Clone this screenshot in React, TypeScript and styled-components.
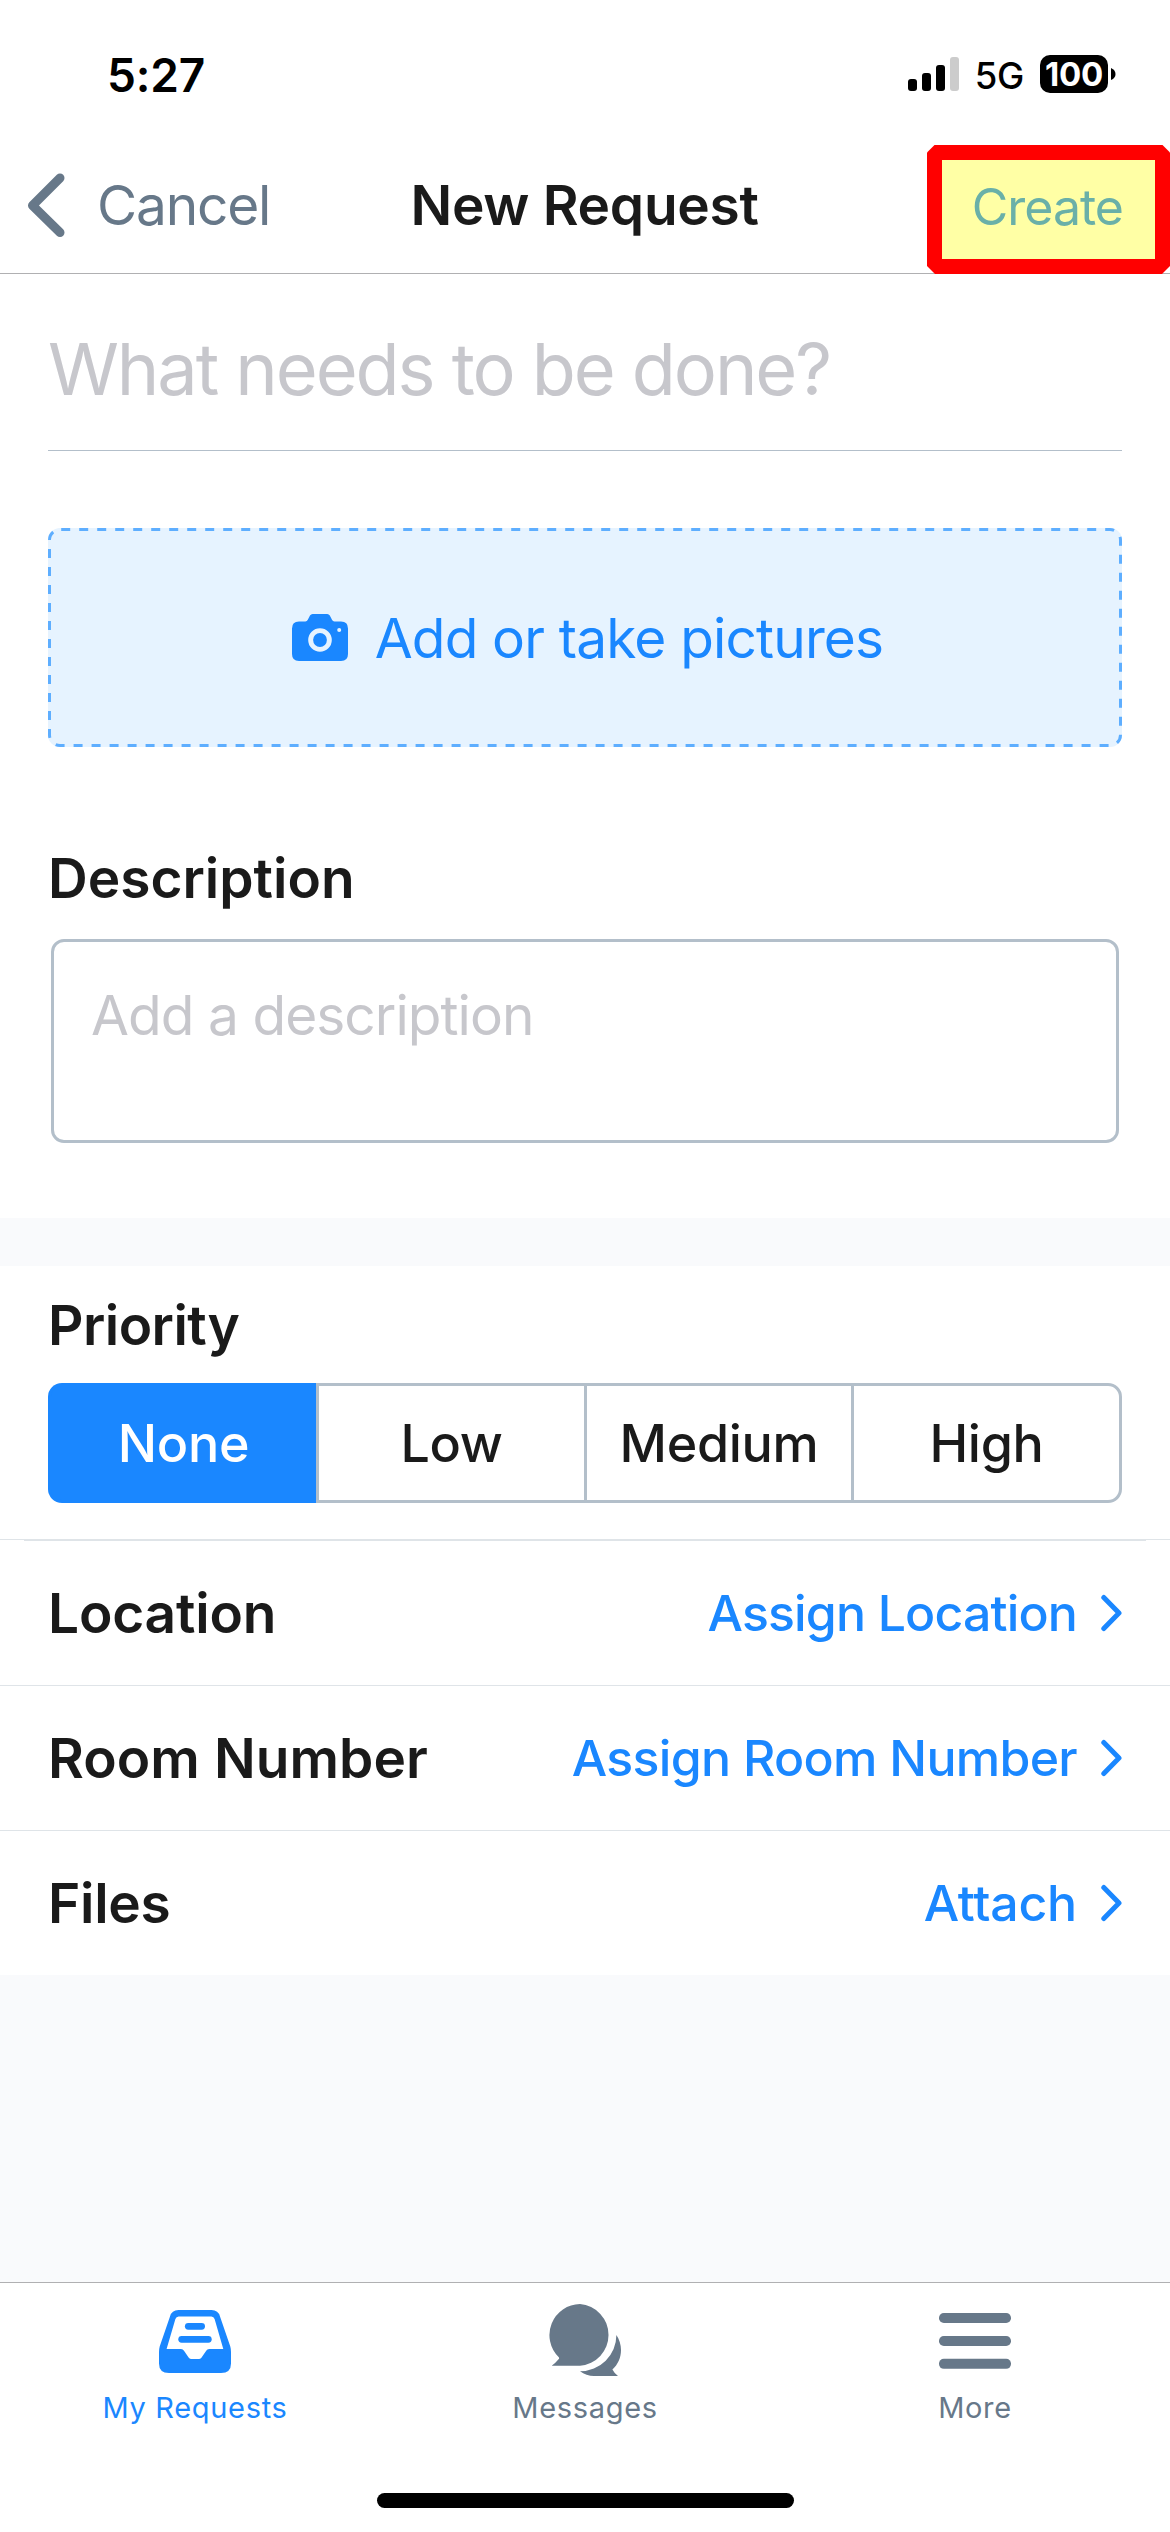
import React, { useState } from "react";
import styled, { createGlobalStyle } from "styled-components";

const color = {
  blue: "#1a87ff",
  slate: "#677889",
  ink: "#1a1a1a",
  placeholder: "#c7c7cc",
  border: "#b3bfca",
  hairline: "#dfe4e8",
  backdrop: "#f9fafc",
};

const GlobalStyle = createGlobalStyle`
  *, *::before, *::after { box-sizing: border-box; }
  body { margin: 0; background: #fff; }
  button { border: 0; padding: 0; margin: 0; background: none; font: inherit; color: inherit; cursor: pointer; }
`;

const Screen = styled.div`
  display: flex;
  flex-direction: column;
  width: 1170px;
  height: 2532px;
  overflow: hidden;
  background: ${color.backdrop};
  color: ${color.ink};
  font-family: Inter, "Liberation Sans", sans-serif;
  white-space: nowrap;
`;

/* ---------- Status bar ---------- */

const StatusBar = styled.div`
  display: flex;
  align-items: center;
  justify-content: space-between;
  height: 137px;
  padding: 13px 54px 0 107px;
  background: #fff;
  color: #000;
`;

const Clock = styled.span`
  font-size: 46px;
  font-weight: 600;
  letter-spacing: -0.2px;
`;

const StatusIcons = styled.div`
  display: flex;
  align-items: center;
  gap: 16px;
`;

const SignalIcon = styled.svg`
  display: block;
  margin-bottom: 2px;
`;

const Network = styled.span`
  padding-top: 1px;
  font-size: 36.5px;
  font-weight: 500;
  letter-spacing: -0.3px;
`;

const Battery = styled.div`
  display: flex;
  align-items: center;
  gap: 3px;
  margin-bottom: 2px;
`;

const BatteryBody = styled.span`
  width: 68px;
  height: 38px;
  border-radius: 10px;
  background: #000;
  color: #fff;
  font-size: 33px;
  font-weight: 700;
  line-height: 38px;
  letter-spacing: -0.3px;
  text-align: center;
`;

/* ---------- Navigation bar ---------- */

const NavBar = styled.header`
  position: relative;
  display: grid;
  grid-template-columns: 1fr auto 1fr;
  align-items: center;
  height: 137px;
  padding: 0 47px 0 26px;
  border-bottom: 1px solid #b0b0b2;
  background: #fff;
  font-size: 55px;
`;

const CancelButton = styled.button`
  display: flex;
  align-items: center;
  gap: 32px;
  color: ${color.slate};
  letter-spacing: -1.2px;
`;

const NavTitle = styled.h1`
  margin: 0 -10px 0 10px;
  font-size: 55px;
  font-weight: 600;
  letter-spacing: -0.29px;
`;

const CreateButton = styled.button`
  position: relative;
  justify-self: end;
  padding-top: 4px;
  color: #6ab0a8;
  font-size: 50px;
  letter-spacing: -1px;
`;

const Callout = styled.div`
  position: absolute;
  top: 7.5px;
  right: 0;
  width: 243px;
  height: 129.5px;
  padding: 15px;
  background: #f00;
  clip-path: polygon(
    8px 0, calc(100% - 8px) 0, 100% 8px, 100% calc(100% - 8px),
    calc(100% - 8px) 100%, 8px 100%, 0 calc(100% - 8px), 0 8px
  );
`;

const CalloutFill = styled.div`
  height: 100%;
  background: #ffffa5;
`;

/* ---------- Form ---------- */

const Section = styled.section<{ $top?: number; $bottom?: number }>`
  padding: ${(p) => p.$top ?? 0}px 48px ${(p) => p.$bottom ?? 0}px;
  background: #fff;
`;

const TitleField = styled.div`
  display: flex;
  align-items: center;
  height: 177px;
  padding-top: 13px;
  border-bottom: 1px solid ${color.border};
  color: ${color.placeholder};
  font-size: 72px;
  letter-spacing: -2.08px;
`;

const PhotoButton = styled.button`
  position: relative;
  display: flex;
  align-items: center;
  justify-content: center;
  gap: 27px;
  width: 100%;
  height: 219px;
  margin-top: 77px;
  padding-left: 5px;
  border-radius: 12px;
  background: #e6f3ff;
  color: ${color.blue};
  font-size: 55px;
  letter-spacing: -0.84px;
`;

const DashedOutline = styled.svg`
  position: absolute;
  inset: 0;
`;

const SectionLabel = styled.h2`
  margin: 0;
  font-size: 55px;
  font-weight: 600;
  line-height: 60px;
  letter-spacing: ${(p: { $tracking?: number }) => p.$tracking ?? 0}px;
`;

const DescriptionLabel = styled(SectionLabel)`
  margin-top: 101px;
`;

const DescriptionField = styled.div`
  height: 204px;
  margin: 31px 3px 0;
  padding: 43px 37px;
  border: 3px solid ${color.border};
  border-radius: 13px;
  color: ${color.placeholder};
  font-size: 55px;
  line-height: 60px;
  letter-spacing: -0.95px;
`;

const SectionGap = styled.div`
  height: 48px;
`;

const Segments = styled.div`
  display: grid;
  grid-template-columns: 268px 268px 267px 1fr;
  height: 120px;
  margin-top: 28px;
  border-radius: 14px;
`;

const Segment = styled.button<{ $active: boolean }>`
  border: 3px solid ${(p) => (p.$active ? color.blue : color.border)};
  border-right-width: 0;
  background: ${(p) => (p.$active ? color.blue : "#fff")};
  color: ${(p) => (p.$active ? "#fff" : color.ink)};
  font-size: 52px;
  font-weight: 500;
  letter-spacing: -0.3px;

  &:first-child {
    border-radius: 14px 0 0 14px;
  }
  &:last-child {
    border-right-width: 3px;
    border-radius: 0 14px 14px 0;
  }
`;

const FieldList = styled.div`
  border-top: 1px solid ${color.hairline};
  background: #fff;
`;

const InsetDivider = styled.div`
  height: 1px;
  margin: 0 24px;
  background: ${color.hairline};
`;

const FieldRow = styled.div`
  display: flex;
  align-items: center;
  justify-content: space-between;
  height: 145px;
  padding: 0 48px;
  border-bottom: 1px solid ${color.hairline};

  &:last-child {
    height: 144px;
    border-bottom: 0;
  }
`;

const AssignButton = styled.button<{ $tracking: number }>`
  display: flex;
  align-items: center;
  gap: 24px;
  color: ${color.blue};
  font-size: 50px;
  font-weight: 500;
  letter-spacing: ${(p) => p.$tracking}px;
`;

/* ---------- Tab bar ---------- */

const Spacer = styled.div`
  flex: 1;
`;

const BottomBar = styled.footer`
  height: 250px;
  border-top: 1px solid #b0b0b2;
  background: #fff;
`;

const Tabs = styled.nav`
  display: grid;
  grid-template-columns: repeat(3, 1fr);
  height: 210px;
`;

const Tab = styled.button<{ $active?: boolean }>`
  display: flex;
  flex-direction: column;
  align-items: center;
  gap: 14px;
  padding-top: 21px;
  color: ${(p) => (p.$active ? color.blue : color.slate)};
  font-size: 29px;
  line-height: 36px;
  letter-spacing: 0.68px;
`;

const HomeIndicator = styled.div`
  width: 417px;
  height: 15px;
  margin: 0 auto;
  border-radius: 8px;
  background: #000;
`;

/* ---------- Icons ---------- */

const BackChevron = () => (
  <svg width="39" height="64" viewBox="0 0 39 64" fill="none" stroke="currentColor" strokeWidth="9" strokeLinecap="round" strokeLinejoin="round">
    <path d="M34 5 6.5 32.5l27.5 27" />
  </svg>
);

const RowChevron = () => (
  <svg width="21" height="38" viewBox="0 0 21 38" fill="none" stroke="currentColor" strokeWidth="5" strokeLinecap="round" strokeLinejoin="round">
    <path d="M2.8 3.5 18 19 2.8 34.5" />
  </svg>
);

const CameraIcon = () => (
  <svg width="56" height="47" viewBox="0 0 56 47" fill="currentColor">
    <path
      fillRule="evenodd"
      d="M7 7.4H13.4Q15 7.4 15.8 5.8L18 1.6Q18.9 0 20.6 0H35.2Q36.9 0 37.8 1.6L40 5.8Q40.8 7.4 42.4 7.4H49Q56 7.4 56 14.4V40Q56 47 49 47H7Q0 47 0 40V14.4Q0 7.4 7 7.4ZM28 14.2a11.8 11.8 0 1 0 0 23.6a11.8 11.8 0 1 0 0-23.6ZM47.2 14a2 2 0 1 0 0 4a2 2 0 1 0 0-4Z"
    />
    <circle cx="28" cy="26" r="6.9" />
  </svg>
);

const InboxIcon = () => (
  <svg width="72" height="72" viewBox="0 0 72 72" fill="currentColor">
    <path
      fillRule="evenodd"
      d="M19.5 6H52.5Q59.3 6 61 12.5L71.3 42.5Q72 45 72 48V59.5Q72 69 62 69H10Q0 69 0 59.5V48Q0 45 .7 42.5L11 12.5Q12.7 6 19.5 6ZM19.6 12.5Q17.2 12.5 16.4 15L7.6 45H22Q24 45 25 46.8L29.6 53.6Q30.4 55 32 55H40.2Q41.8 55 42.6 53.6L47.2 46.8Q48.2 45 50.2 45H64.3L55.6 15Q54.8 12.5 52.4 12.5Z"
    />
    <rect x="25.9" y="19" width="20.1" height="6.7" rx="3.35" />
    <rect x="19.3" y="32" width="33.4" height="6.7" rx="3.35" />
  </svg>
);

const MessagesIcon = () => (
  <svg width="72" height="72" viewBox="0 0 72 72" fill="currentColor">
    <path d="M31 0A31 31 0 0 1 31 61.8H2.7Q6.5 59 9.8 55Q10.5 54 9.6 53A31 31 0 0 1 31 0Z" />
    <path d="M67.4 31C70.4 35.5 72 41 72 46C72 53.5 69 60.5 63.4 65.5Q65.5 69.5 69 72H45C40 72 35 70.2 31 67.2A36.3 36.3 0 0 0 67.4 31Z" />
  </svg>
);

const MenuIcon = () => (
  <svg width="72" height="72" viewBox="0 0 72 72" fill="currentColor">
    {[9, 32, 54.8].map((y) => (
      <rect key={y} x="0" y={y} width="72" height="10" rx="4.8" />
    ))}
  </svg>
);

/* ---------- Screen ---------- */

const PRIORITIES = ["None", "Low", "Medium", "High"];

const FIELDS = [
  { label: "Location", labelTracking: -0.18, action: "Assign Location", tracking: -0.85 },
  { label: "Room Number", labelTracking: 0.07, action: "Assign Room Number", tracking: -0.7 },
  { label: "Files", labelTracking: -0.29, action: "Attach", tracking: -0.2 },
];

export default function App() {
  const [priority, setPriority] = useState("None");

  return (
    <Screen>
      <GlobalStyle />

      <StatusBar>
        <Clock>5:27</Clock>
        <StatusIcons>
          <SignalIcon width="51" height="34" viewBox="0 0 51 34">
            <rect x="0" y="22" width="9" height="12" rx="3" />
            <rect x="14" y="16" width="9" height="18" rx="3" />
            <rect x="28" y="8" width="9" height="26" rx="3" />
            <rect x="42" y="0" width="9" height="34" rx="3" fill="#ccc" />
          </SignalIcon>
          <Network>5G</Network>
          <Battery>
            <BatteryBody>100</BatteryBody>
            <svg width="5" height="12" viewBox="0 0 5 12">
              <path d="M0 0Q4.5 2 4.5 6T0 12Z" />
            </svg>
          </Battery>
        </StatusIcons>
      </StatusBar>

      <NavBar>
        <CancelButton>
          <BackChevron />
          <span>Cancel</span>
        </CancelButton>
        <NavTitle>New Request</NavTitle>
        <Callout>
          <CalloutFill />
        </Callout>
        <CreateButton>Create</CreateButton>
      </NavBar>

      <Section $bottom={75}>
        <TitleField>What needs to be done?</TitleField>
        <PhotoButton>
          <DashedOutline width="1074" height="219" viewBox="0 0 1074 219" fill="none">
            <rect x="1.5" y="1.5" width="1071" height="216" rx="10.5" stroke="#5eaeff" strokeWidth="3" strokeDasharray="9 9" strokeDashoffset="-1.2" />
          </DashedOutline>
          <CameraIcon />
          <span>Add or take pictures</span>
        </PhotoButton>
        <DescriptionLabel>Description</DescriptionLabel>
        <DescriptionField>Add a description</DescriptionField>
      </Section>

      <SectionGap />

      <Section $top={29} $bottom={36}>
        <SectionLabel $tracking={-0.53}>Priority</SectionLabel>
        <Segments>
          {PRIORITIES.map((name) => (
            <Segment key={name} $active={name === priority} onClick={() => setPriority(name)}>
              {name}
            </Segment>
          ))}
        </Segments>
      </Section>

      <FieldList>
        <InsetDivider />
        {FIELDS.map((field) => (
          <FieldRow key={field.label}>
            <SectionLabel $tracking={field.labelTracking}>{field.label}</SectionLabel>
            <AssignButton $tracking={field.tracking}>
              <span>{field.action}</span>
              <RowChevron />
            </AssignButton>
          </FieldRow>
        ))}
      </FieldList>

      <Spacer />

      <BottomBar>
        <Tabs>
          <Tab $active>
            <InboxIcon />
            <span>My Requests</span>
          </Tab>
          <Tab>
            <MessagesIcon />
            <span>Messages</span>
          </Tab>
          <Tab>
            <MenuIcon />
            <span>More</span>
          </Tab>
        </Tabs>
        <HomeIndicator />
      </BottomBar>
    </Screen>
  );
}
